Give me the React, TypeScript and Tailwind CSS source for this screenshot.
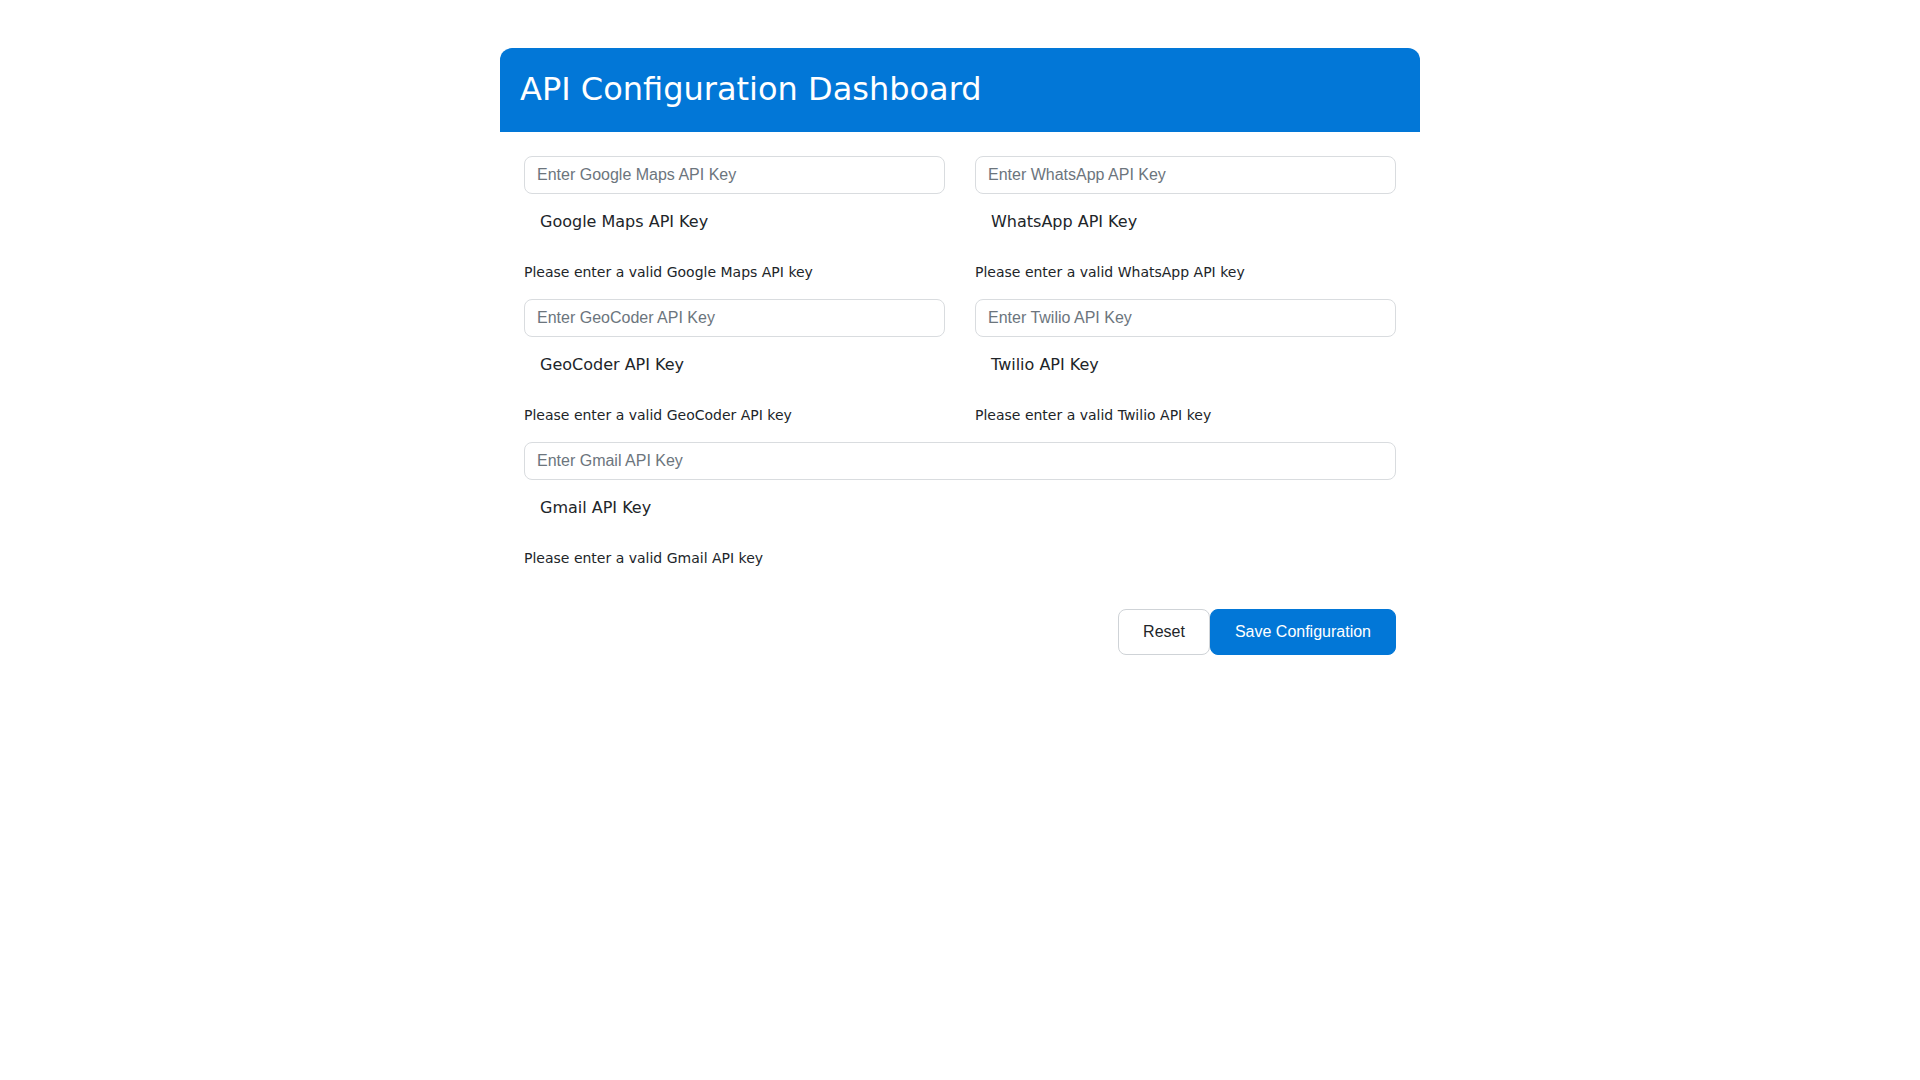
import React from "react";

const dv = { fontFamily: '"DejaVu Sans", sans-serif' };

function Field({ placeholder, label, help, wide }: { placeholder: string; label: string; help: string; wide?: boolean }) {
  return (
    <div className={wide ? "col-span-2 flex flex-col" : "flex flex-col"}>
      <input
        type="text"
        placeholder={placeholder}
        className="h-[38px] w-full rounded-lg border border-[#d9dcdf] bg-white px-3 text-[16px] text-[#212529] outline-none placeholder:text-[#6c757d] font-['Liberation_Sans',Arial,sans-serif]"
      />
      <label className="mt-4 pl-4 text-[16px] leading-6 text-[#212529] font-['DejaVu_Sans',sans-serif]">{label}</label>
      <div className="mt-[28px] text-[14px] leading-5 text-[#212529] font-['DejaVu_Sans',sans-serif]">{help}</div>
    </div>
  );
}

export default function App() {
  return (
    <div className="min-h-screen bg-white" style={dv}>
      <div className="mx-auto mt-12 w-[920px]">
        <div className="flex h-[84px] items-center rounded-t-xl bg-[#0277d7] px-5">
          <h1 className="-mt-[2px] text-[32px] leading-[38px] font-normal text-white font-['DejaVu_Sans',sans-serif]">API Configuration Dashboard</h1>
        </div>
        <div className="px-6 pt-6">
          <div className="grid grid-cols-2 gap-x-[30px] gap-y-[17px]">
            <Field placeholder="Enter Google Maps API Key" label="Google Maps API Key" help="Please enter a valid Google Maps API key" />
            <Field placeholder="Enter WhatsApp API Key" label="WhatsApp API Key" help="Please enter a valid WhatsApp API key" />
            <Field placeholder="Enter GeoCoder API Key" label="GeoCoder API Key" help="Please enter a valid GeoCoder API key" />
            <Field placeholder="Enter Twilio API Key" label="Twilio API Key" help="Please enter a valid Twilio API key" />
            <Field wide placeholder="Enter Gmail API Key" label="Gmail API Key" help="Please enter a valid Gmail API key" />
          </div>
          <div className="mt-[41px] flex justify-end">
            <button className="h-[46px] rounded-lg border border-[#cfd3d7] bg-white px-6 text-[16px] text-[#212529] font-['Liberation_Sans',Arial,sans-serif]">Reset</button>
            <button className="h-[46px] rounded-lg border border-[#0277d7] bg-[#0277d7] px-6 text-[16px] text-white font-['Liberation_Sans',Arial,sans-serif]">Save Configuration</button>
          </div>
        </div>
      </div>
    </div>
  );
}
